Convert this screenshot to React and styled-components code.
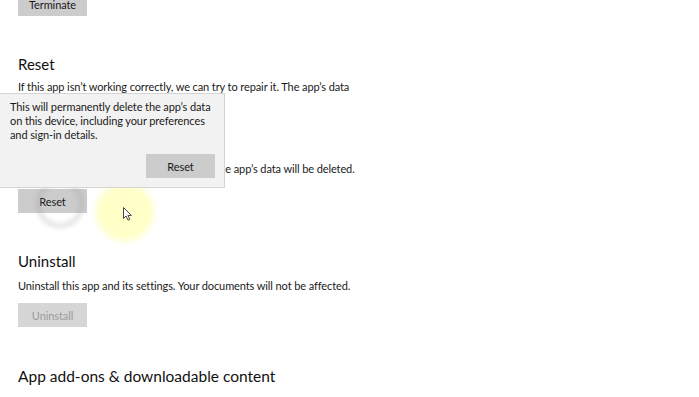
import React from "react";
import styled, { createGlobalStyle } from "styled-components";

const GlobalStyle = createGlobalStyle`
  html, body {
    margin: 0;
    padding: 0;
    background: #ffffff;
    overflow: hidden;
  }
  body {
    width: 699px;
    height: 397px;
    font-family: Lato, "Noto Sans", sans-serif;
    color: #000;
  }
`;

const Page = styled.div`
  position: relative;
  width: 699px;
  height: 397px;
  overflow: hidden;
  padding-left: 18px;
  box-sizing: border-box;
`;

const Section = styled.section`
  display: flex;
  flex-direction: column;
  align-items: flex-start;
  margin-top: ${(p) => p.gap || 0}px;
`;

const Heading = styled.h2`
  margin: 0;
  font-size: ${(p) => p.size || 15}px;
  font-weight: 400;
  line-height: 20px;
  color: #111;
`;

const Text = styled.p`
  margin: ${(p) => p.top || 0}px 0 0;
  font-size: 11px;
  line-height: 18px;
  letter-spacing: -0.1px;
  white-space: nowrap;
  color: #1a1a1a;
`;

const Button = styled.button`
  width: 69px;
  height: 24px;
  margin-top: ${(p) => p.top || 0}px;
  padding: 0;
  border: none;
  background: ${(p) => (p.disabled ? "#d6d6d6" : "#cccccc")};
  color: ${(p) => (p.disabled ? "#9c9c9c" : "#1a1a1a")};
  font-family: inherit;
  font-size: 11px;
  letter-spacing: -0.1px;
  cursor: default;
`;

const Flyout = styled.div`
  position: absolute;
  left: 0;
  top: 93px;
  width: 214px;
  height: 87px;
  padding: 6px 0 0 10px;
  background: #f2f2f2;
  border: 1px solid #d4d4d4;
  border-left: none;
  display: flex;
  flex-direction: column;
`;

const FlyoutText = styled.p`
  margin: 0;
  font-size: 11px;
  line-height: 14px;
  letter-spacing: -0.1px;
  color: #1a1a1a;
  white-space: nowrap;
`;

const FlyoutActions = styled.div`
  display: flex;
  justify-content: flex-end;
  padding-right: 9px;
  margin-top: 12px;
`;

const Glow = styled.div`
  position: absolute;
  left: ${(p) => p.x}px;
  top: ${(p) => p.y}px;
  width: ${(p) => p.r * 2}px;
  height: ${(p) => p.r * 2}px;
  margin: ${(p) => -p.r}px 0 0 ${(p) => -p.r}px;
  border-radius: 50%;
  background: ${(p) => p.bg};
  filter: blur(${(p) => p.blur || 2}px);
  pointer-events: none;
`;

const Cursor = styled.svg`
  position: absolute;
  left: 123px;
  top: 207px;
  width: 10px;
  height: 14px;
`;

export default function App() {
  return (
    <>
      <GlobalStyle />
      <Page>
        <Section>
          <Button top={-8}>Terminate</Button>
        </Section>

        <Section gap={38}>
          <Heading>Reset</Heading>
          <Text top={4}>
            If this app isn’t working correctly, we can try to repair it. The app’s data
          </Text>
          <Text>won’t be affected.</Text>
          <Button top={8}>Repair</Button>
          <Text top={14}>
            If this app still isn’t working right, reset it. The app’s data will be deleted.
          </Text>
          <Button top={11}>Reset</Button>
        </Section>

        <Section gap={38}>
          <Heading>Uninstall</Heading>
          <Text top={6}>
            Uninstall this app and its settings. Your documents will not be affected.
          </Text>
          <Button top={8} disabled>
            Uninstall
          </Button>
        </Section>

        <Section gap={39}>
          <Heading size={15.5}>App add-ons &amp; downloadable content</Heading>
        </Section>

        <Glow
          x={60}
          y={204}
          r={24}
          bg="radial-gradient(circle, rgba(150,150,150,0) 50%, rgba(150,150,150,0.4) 72%, rgba(150,150,150,0) 100%)"
          blur={2}
        />
        <Glow x={125} y={212} r={29} bg="rgba(255, 255, 185, 0.8)" blur={3} />

        <Flyout>
          <FlyoutText>
            This will permanently delete the app’s data
            <br />
            on this device, including your preferences
            <br />
            and sign-in details.
          </FlyoutText>
          <FlyoutActions>
            <Button>Reset</Button>
          </FlyoutActions>
        </Flyout>

        <Cursor viewBox="0 0 10 14">
          <path
            d="M0.5 0.5 L0.5 11.5 L3 9 L5 13.2 L6.8 12.4 L4.9 8.4 L8.4 8.4 Z"
            fill="#fff"
            stroke="#333"
            strokeWidth="0.9"
            strokeLinejoin="round"
          />
        </Cursor>
      </Page>
    </>
  );
}
